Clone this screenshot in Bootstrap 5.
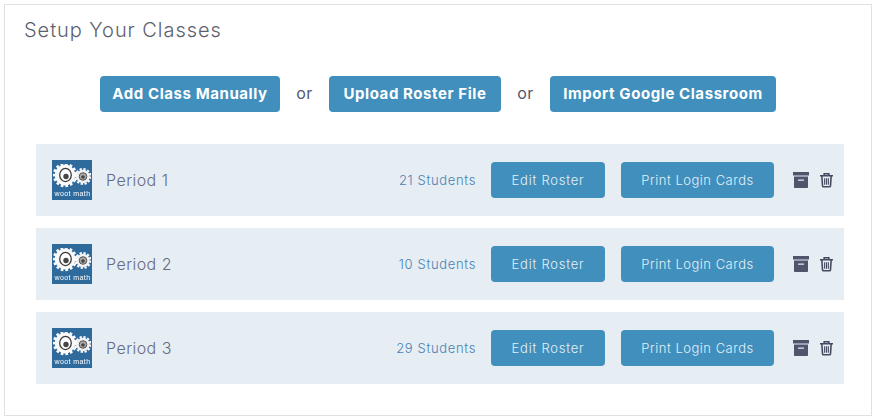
<!DOCTYPE html>
<html lang="en">
<head>
<meta charset="utf-8">
<title>Setup Your Classes</title>
<link href="https://cdn.jsdelivr.net/npm/bootstrap@5.3.0/dist/css/bootstrap.min.css" rel="stylesheet">
<style>
html,body{height:420px;overflow:hidden;background:#fff}
body{font-family:Inter,"Liberation Sans",sans-serif;color:#555a72}
.setup-panel{margin:4px 5px 4px 4px;height:412px;border:1px solid #e1e1e1;padding:0 27px 0 31px}
.setup-title{font-size:20px;font-weight:300;color:#5c5f6e;margin:0 0 0 -12px;height:71px;padding-top:12px;line-height:26px;letter-spacing:.95px}
.add-row{height:36px;margin-bottom:32px;margin-left:-4px}
.sep-word{font-size:16px;color:#53566f;width:49px;text-align:center;margin-top:-2px;letter-spacing:.4px}
.woot-btn{background:#418fbd;border:0;color:#fff;height:36px;border-radius:4px;padding:0;display:flex;align-items:center;justify-content:center}
.woot-btn:hover{background:#418fbd;color:#fff}
.add-btn{font-size:15px;font-weight:700;letter-spacing:.58px}
.w-a{width:180px}.w-b{width:172px}.w-c{width:226px}
.class-row{height:72px;background:#e6edf3;margin-bottom:12px;padding-left:16px}
.class-logo{width:40px;height:40px;flex:none;display:block}
.period-name{font-size:16px;font-weight:300;color:#666c80;margin-left:14px;letter-spacing:.45px}
.student-count{font-size:13px;font-weight:300;color:#4a82b3;margin-left:auto;margin-right:15px;letter-spacing:.65px;padding-top:1px}
.row-btn{font-size:13px;font-weight:300;color:#e3eff7;padding-top:1px}
.row-btn:hover{color:#e3eff7}
.w-d{width:114px;margin-right:16px;letter-spacing:.75px}.w-e{width:153px;letter-spacing:.5px}
.tools{width:70px;padding-left:19px;gap:11px}
.svg-defs{position:absolute}
</style>
</head>
<body>
<div class="setup-panel">
  <h1 class="setup-title">Setup Your Classes</h1>
  <div class="add-row d-flex justify-content-center align-items-center">
    <button class="btn woot-btn add-btn w-a">Add Class Manually</button>
    <span class="sep-word">or</span>
    <button class="btn woot-btn add-btn w-b">Upload Roster File</button>
    <span class="sep-word">or</span>
    <button class="btn woot-btn add-btn w-c">Import Google Classroom</button>
  </div>

  <div class="class-row d-flex align-items-center">
    <svg class="class-logo" viewBox="0 0 40 40"><use href="#woot"/></svg>
    <span class="period-name">Period 1</span>
    <span class="student-count">21 Students</span>
    <button class="btn woot-btn row-btn w-d">Edit Roster</button>
    <button class="btn woot-btn row-btn w-e">Print Login Cards</button>
    <div class="tools d-flex align-items-center"><svg width="16" height="16" viewBox="0 0 16 16"><use href="#arch"/></svg><svg width="13" height="16" viewBox="0 0 14 16"><use href="#trash"/></svg></div>
  </div>
  <div class="class-row d-flex align-items-center">
    <svg class="class-logo" viewBox="0 0 40 40"><use href="#woot"/></svg>
    <span class="period-name">Period 2</span>
    <span class="student-count">10 Students</span>
    <button class="btn woot-btn row-btn w-d">Edit Roster</button>
    <button class="btn woot-btn row-btn w-e">Print Login Cards</button>
    <div class="tools d-flex align-items-center"><svg width="16" height="16" viewBox="0 0 16 16"><use href="#arch"/></svg><svg width="13" height="16" viewBox="0 0 14 16"><use href="#trash"/></svg></div>
  </div>
  <div class="class-row d-flex align-items-center">
    <svg class="class-logo" viewBox="0 0 40 40"><use href="#woot"/></svg>
    <span class="period-name">Period 3</span>
    <span class="student-count">29 Students</span>
    <button class="btn woot-btn row-btn w-d">Edit Roster</button>
    <button class="btn woot-btn row-btn w-e">Print Login Cards</button>
    <div class="tools d-flex align-items-center"><svg width="16" height="16" viewBox="0 0 16 16"><use href="#arch"/></svg><svg width="13" height="16" viewBox="0 0 14 16"><use href="#trash"/></svg></div>
  </div>
</div>

<svg width="0" height="0" class="svg-defs">
  <defs>
    <filter id="soft" x="0" y="0" width="100%" height="100%"><feGaussianBlur stdDeviation=".35"/></filter>
    <g id="woot">
      <rect width="40" height="40" fill="#2f6a9c"/>
      <g filter="url(#soft)">
        <circle cx="13" cy="15" r="11" fill="none" stroke="#fff" stroke-width="2.600" stroke-dasharray="2.600 2.100"/>
        <circle cx="13" cy="15" r="10.400" fill="#fafafa"/>
        <ellipse cx="13.500" cy="15" rx="5.800" ry="6.600" fill="#fff" stroke="#3a3a3a" stroke-width="1.300"/>
        <circle cx="14" cy="16.500" r="2.700" fill="#444"/>
        <circle cx="31" cy="16.500" r="7.400" fill="none" stroke="#fff" stroke-width="2.200" stroke-dasharray="2.200 1.700"/>
        <circle cx="31" cy="16.500" r="6.800" fill="#f2f2f2"/>
        <circle cx="31" cy="16.500" r="3.800" fill="#aaa" stroke="#555" stroke-width="1"/>
        <circle cx="31" cy="17" r="1.800" fill="#444"/>
        <text x="20.500" y="36" text-anchor="middle" font-family="Liberation Sans,sans-serif" font-size="7" letter-spacing=".4" fill="#fff">woot math</text>
      </g>
    </g>
    <g id="arch" fill="#51556b">
      <rect x="0" y="0" width="16" height="3.500"/>
      <path d="M1 4.500h14v10.700a.8.8 0 0 1-.8.8H1.800a.8.8 0 0 1-.8-.8zM5.500 7.500a.5.5 0 0 0 0 1.300h5a.5.500 0 0 0 0-1.300z" fill-rule="evenodd"/>
    </g>
    <g id="trash" fill="none" stroke="#454a60" stroke-width="1.700">
      <path d="M0 3.500h14M4.500 3V1.200h5V3M2 4l.7 10.300q.1.900 1 .9h6.600q.9 0 1-.9L12 4"/>
      <path d="M5 6v7M7 6v7M9 6v7" stroke-width="1.200"/>
    </g>
  </defs>
</svg>
<script src="https://cdn.jsdelivr.net/npm/bootstrap@5.3.0/dist/js/bootstrap.bundle.min.js"></script>
</body>
</html>
